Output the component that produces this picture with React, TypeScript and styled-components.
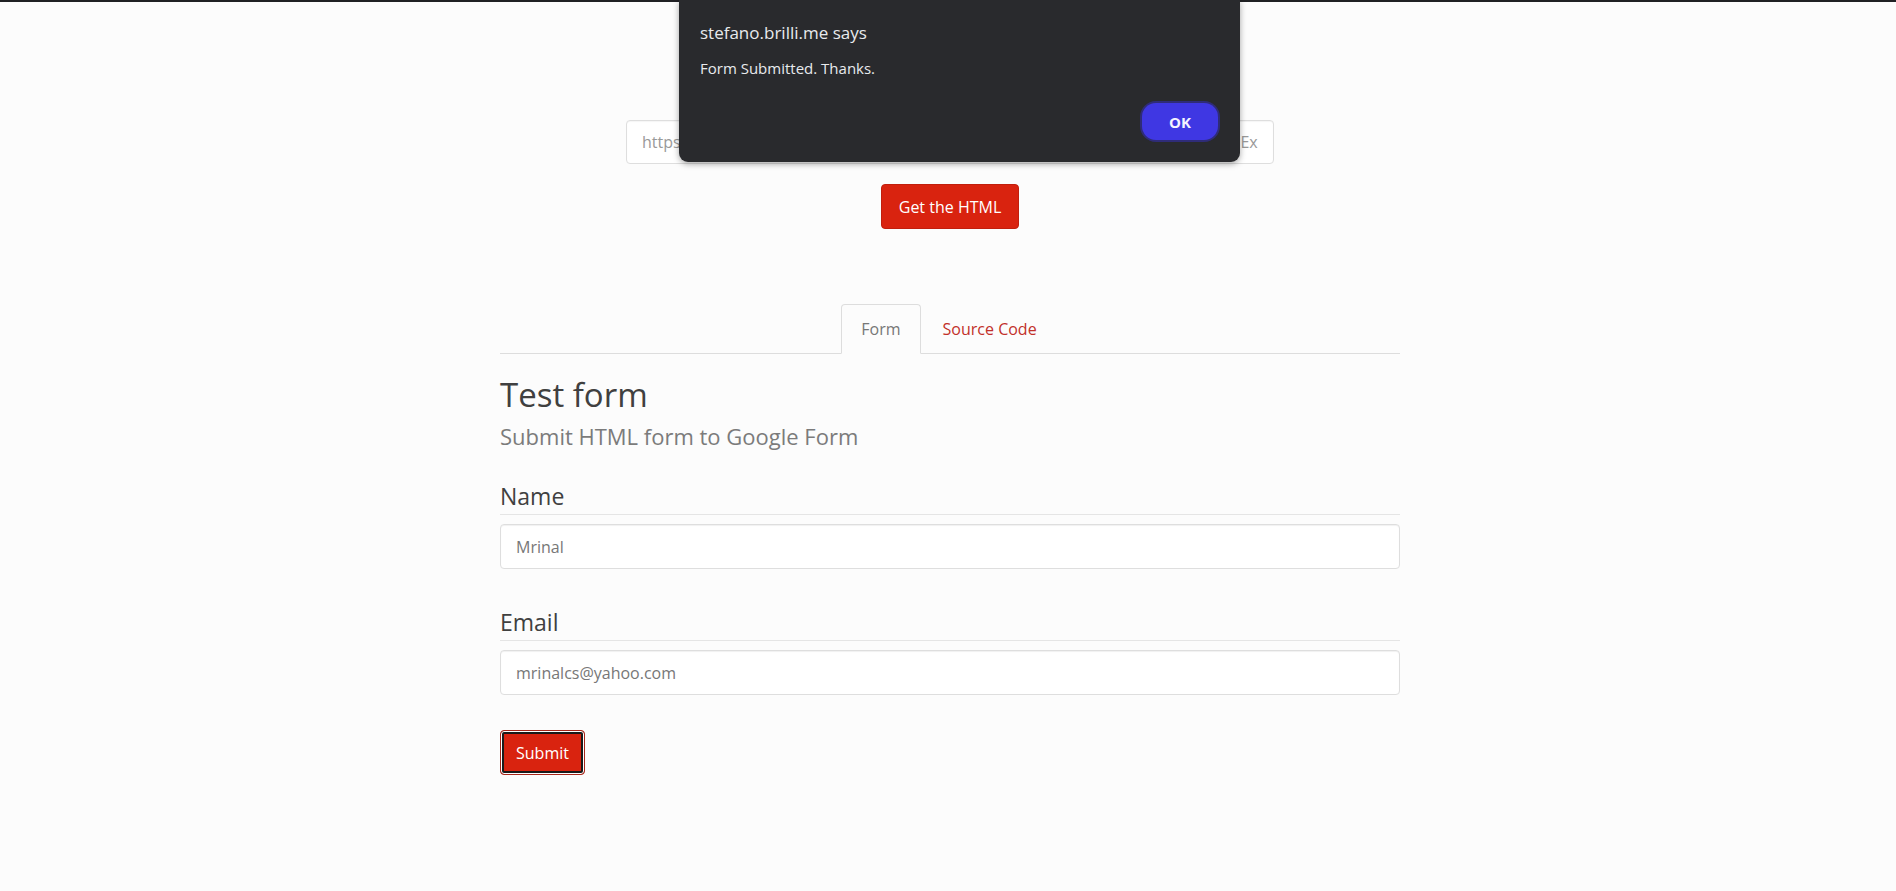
import React from "react";
import styled, { createGlobalStyle } from "styled-components";

const Global = createGlobalStyle`
  html, body { margin: 0; padding: 0; }
  body {
    background: #fcfcfc;
    font-family: "Open Sans", "Noto Sans", sans-serif;
    color: #404040;
  }
  * { box-sizing: border-box; }
`;

const TopBar = styled.div`
  height: 2px;
  background: #202124;
`;

const Page = styled.div`
  position: relative;
  min-height: 889px;
  padding-left: 4px;
`;

const UrlSection = styled.div`
  display: flex;
  flex-direction: column;
  align-items: center;
  padding-top: 118px;
  gap: 20px;
`;

const UrlInput = styled.input`
  width: 648px;
  height: 44px;
  padding: 0 13px 0 15px;
  font-family: "Open Sans", sans-serif;
  font-size: 16px;
  color: #777;
  background: #fff;
  border: 1px solid #dedede;
  border-radius: 4px;
  box-shadow: inset 0 1px 1px rgba(0, 0, 0, 0.04);
  outline: none;
  &::placeholder { color: #999; }
`;

const RedButton = styled.button<{ $focused?: boolean }>`
  height: 45px;
  padding: 0 ${(p) => (p.$focused ? "15px" : "17px")};
  font-family: "Open Sans", sans-serif;
  font-size: 16px;
  color: #fff;
  background: #d9230f;
  border: 1px solid ${(p) => (p.$focused ? "#a8261a" : "#c11f0d")};
  border-radius: 4px;
  cursor: pointer;
  box-shadow: ${(p) =>
    p.$focused ? "inset 0 0 0 1px #fff, inset 0 0 0 3px #1a1a1a" : "none"};
`;

const Container = styled.div`
  width: 900px;
  margin: 75px auto 0;
`;

const Tabs = styled.ul`
  display: flex;
  justify-content: center;
  list-style: none;
  margin: 0;
  padding: 0;
  border-bottom: 1px solid #ddd;
`;

const Tab = styled.li<{ $active?: boolean }>`
  height: 50px;
  margin: 0 2px -1px 0;
  padding: 0 19px;
  display: flex;
  align-items: center;
  font-size: 16px;
  color: ${(p) => (p.$active ? "#777" : "#c2302a")};
  background: ${(p) => (p.$active ? "#fcfcfc" : "transparent")};
  border: 1px solid ${(p) => (p.$active ? "#ddd" : "transparent")};
  border-bottom-color: ${(p) => (p.$active ? "#fcfcfc" : "transparent")};
  border-radius: 4px 4px 0 0;
  cursor: pointer;
`;

const Title = styled.h1`
  margin: 23px 0 0;
  font-size: 33px;
  font-weight: 400;
  line-height: 1.1;
  color: #404040;
`;

const Subtitle = styled.h3`
  margin: 11px 0 0;
  font-size: 22px;
  font-weight: 400;
  line-height: 1.1;
  color: #7b7b7b;
`;

const Field = styled.div<{ $first?: boolean }>`
  margin-top: ${(p) => (p.$first ? "32px" : "37px")};
`;

const Legend = styled.div`
  font-size: 23px;
  line-height: 1.42857;
  color: #404040;
  padding-bottom: 1px;
  border-bottom: 1px solid #e5e5e5;
  margin-bottom: 9px;
`;

const TextInput = styled.input`
  display: block;
  width: 100%;
  height: 45px;
  padding: 0 15px;
  font-family: "Open Sans", sans-serif;
  font-size: 16px;
  color: #777;
  background: #fff;
  border: 1px solid #dedede;
  border-radius: 4px;
  box-shadow: inset 0 1px 1px rgba(0, 0, 0, 0.06);
  outline: none;
`;

const SubmitRow = styled.div`
  margin-top: 35px;
`;

const Dialog = styled.div`
  position: absolute;
  left: 679px;
  top: -2px;
  width: 561px;
  height: 162px;
  background: #292a2d;
  border-radius: 0 0 9px 9px;
  box-shadow: 0 2px 6px rgba(0, 0, 0, 0.35);
  padding: 21px 20px 22px 21px;
  display: flex;
  flex-direction: column;
`;

const DialogTitle = styled.div`
  font-family: "Open Sans", sans-serif;
  font-size: 17px;
  line-height: 24px;
  color: #e8eaed;
`;

const DialogMessage = styled.div`
  margin-top: 13px;
  font-family: "Open Sans", sans-serif;
  font-size: 15px;
  line-height: 20px;
  color: #e8eaed;
`;

const DialogActions = styled.div`
  margin-top: auto;
  display: flex;
  justify-content: flex-end;
`;

const OkButton = styled.button`
  width: 76px;
  height: 37px;
  border-radius: 14px;
  border: none;
  background: #3f37e3;
  box-shadow: 0 0 0 2px #2f2c78;
  color: #f4f3ff;
  font-family: "Open Sans", sans-serif;
  font-weight: 700;
  font-size: 15px;
  margin-right: 2px;
  cursor: pointer;
`;

export default function App() {
  return (
    <>
      <Global />
      <TopBar />
      <Page>
        <UrlSection>
          <UrlInput placeholder="https://docs.google.com/forms/d/e/1FAIpQLSfD8dRv0aX3cLmPq/viewform?usp_ Ex https://forms.gle/example" />
          <RedButton>Get the HTML</RedButton>
        </UrlSection>
        <Container>
          <Tabs>
            <Tab $active>Form</Tab>
            <Tab>Source Code</Tab>
          </Tabs>
          <Title>Test form</Title>
          <Subtitle>Submit HTML form to Google Form</Subtitle>
          <Field $first>
            <Legend>Name</Legend>
            <TextInput defaultValue="Mrinal" />
          </Field>
          <Field>
            <Legend>Email</Legend>
            <TextInput defaultValue="mrinalcs@yahoo.com" />
          </Field>
          <SubmitRow>
            <RedButton $focused>Submit</RedButton>
          </SubmitRow>
        </Container>
        <Dialog>
          <DialogTitle>stefano.brilli.me says</DialogTitle>
          <DialogMessage>Form Submitted. Thanks.</DialogMessage>
          <DialogActions>
            <OkButton>OK</OkButton>
          </DialogActions>
        </Dialog>
      </Page>
    </>
  );
}
